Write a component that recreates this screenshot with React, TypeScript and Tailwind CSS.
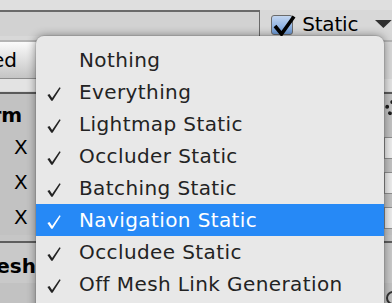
const items = [
  { label: "Nothing", checked: false },
  { label: "Everything", checked: true },
  { label: "Lightmap Static", checked: true },
  { label: "Occluder Static", checked: true },
  { label: "Batching Static", checked: true },
  { label: "Navigation Static", checked: true, active: true },
  { label: "Occludee Static", checked: true },
  { label: "Off Mesh Link Generation", checked: true },
];

function Gear() {
  return <div className="mr-[-9px] h-[16px] w-[16px] rounded-full border-[4px] border-dotted border-[#1e1e1e]" />;
}

function Check() {
  return (
    <svg width="14" height="14" viewBox="0 0 14 14" className="mt-[11px]">
      <path d="M0.4 7.9 L2.5 6.9 L5.1 10.9 L12.5 0.2 L13.7 0.9 L5.6 13.7 L4.3 13.7 Z" fill="currentColor" />
    </svg>
  );
}

export default function App() {
  return (
    <div className="relative h-[303px] w-[392px] overflow-hidden bg-[#c2c2c2] font-['DejaVu_Sans',sans-serif] text-black">
      {/* game object header */}
      <div className="h-[94px] border-b-2 border-[#5a5a5a] bg-[#d8d8d8]">
        <div className="h-[10px] bg-[#dfdfdf]" />
        <div className="flex h-[28px] items-start">
          <div className="h-[26px] w-[263px] border-r border-t-2 border-[#6a6a6a] bg-[#d2d2d2]" />
          <div className="relative ml-[11px] mt-[5px] h-[20px] w-[23px] rounded-[3px] border border-[#6b6b6b] bg-gradient-to-b from-[#c3d6f0] to-[#6d9bd8]">
            <svg className="absolute left-[-1px] top-[-1px]" width="26" height="22" viewBox="0 0 26 22">
              <path d="M4 11 L10.5 19 L23 1.5" fill="none" stroke="#000" strokeWidth="3.6" strokeLinejoin="miter" />
            </svg>
          </div>
          <span className="ml-[9px] mt-[1px] text-[20px] leading-[26px] tracking-[-0.2px]">Static</span>
          <svg className="ml-[17px] mt-[10px]" width="17" height="8" viewBox="0 0 17 8">
            <path d="M0 0 H17 L8.5 8 Z" fill="#303030" />
          </svg>
        </div>
        <div className="mt-[2px] h-[2px] bg-[#b4b4b4]" />
        <div className="flex h-[37px] w-[36px] items-center justify-end overflow-hidden border-b border-[#8c8c8c] bg-gradient-to-b from-[#fbfbfb] to-[#c4c4c4] pr-[19px]">
          <span className="whitespace-nowrap text-[20px] leading-[26px]">Untagged</span>
        </div>
        <div className="h-[12px] bg-[#e3e3e3]" />
      </div>

      {/* transform */}
      <div className="flex h-[36px] items-start justify-between pt-[6px]">
        <span className="ml-[-92px] whitespace-nowrap text-[20px] font-bold leading-[30px]">Transform</span>
        <Gear />
      </div>
      {["Position", "Rotation", "Scale"].map((row) => (
        <div key={row} className="flex h-[35px] items-center justify-between">
          <span className="pl-[14px] text-[20px] leading-[35px]">X</span>
          <div className="mr-[-6px] h-[22px] w-[14px] border border-[#8e8e8e] bg-[#ececec]" />
        </div>
      ))}
      <div className="h-[6px] bg-[#c6c6c6]" />
      <div className="h-[2px] bg-[#5e5e5e]" />

      {/* mesh */}
      <div className="flex h-[40px] items-start justify-between bg-[#c9c9c9] pt-[3px]">
        <div className="flex w-[36px] justify-end overflow-hidden">
          <span className="whitespace-nowrap text-[20px] font-bold leading-[40px]">Mesh</span>
        </div>
        <div className="mr-[-9px] mt-[6px]">
          <Gear />
        </div>
      </div>
      <div className="flex h-[30px] items-center justify-end">
        <div className="mr-[-8px] h-[14px] w-[14px] rounded-full border-2 border-[#333]" />
      </div>

      {/* static flags menu */}
      <div className="absolute left-[36px] top-[36px] h-[290px] w-[348px] rounded-t-[8px] bg-[#e8e8e8] pt-[8px] shadow-[0_0_10px_rgba(0,0,0,0.45),0_0_0_1px_rgba(0,0,0,0.08)]">
        {items.map((item) => (
          <div
            key={item.label}
            className={
              item.active
                ? "flex h-[32px] items-start bg-[#2689f6] pl-[11px] text-white"
                : "flex h-[32px] items-start pl-[11px] text-[#232323]"
            }
          >
            <span className="flex h-[32px] w-[32px] items-start">{item.checked ? <Check /> : null}</span>
            <span className="whitespace-nowrap text-[20px] leading-[32px] tracking-[0.4px]">{item.label}</span>
          </div>
        ))}
      </div>
    </div>
  );
}
